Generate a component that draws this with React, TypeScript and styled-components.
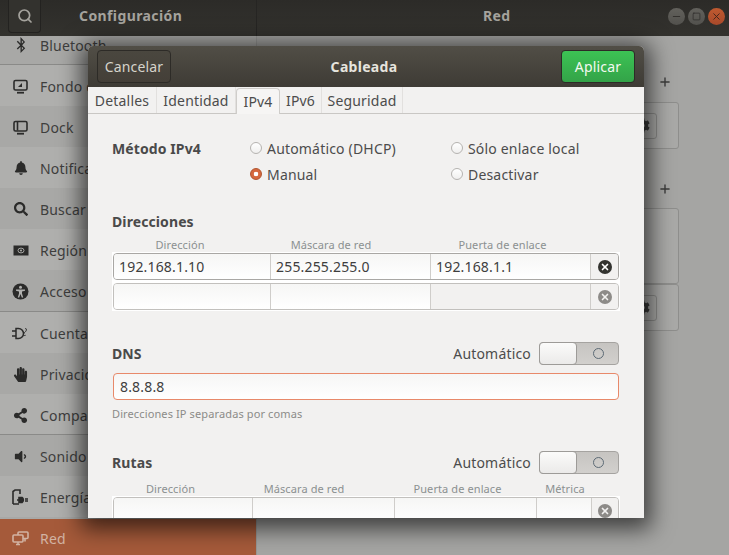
import React, { ReactElement, ReactNode } from 'react';
import styled, { createGlobalStyle } from 'styled-components';
import { Search, Plus, Minus, Square, X } from 'lucide-react';
import {
	FaBluetoothB,
	FaBell,
	FaSearch,
	FaHandPaper,
	FaShareAlt,
	FaVolumeDown,
	FaCog,
} from 'react-icons/fa';

const GlobalStyle = createGlobalStyle`
	html, body {
		margin: 0;
		padding: 0;
		width: 729px;
		height: 555px;
		overflow: hidden;
		background: #a5a5a3;
		font-family: "Noto Sans", "Open Sans", sans-serif;
		font-size: 14px;
		letter-spacing: 0.18px;
		color: #484848;
	}
	* {
		box-sizing: border-box;
	}
`;

const Desktop = styled.div`
	position: relative;
	width: 729px;
	height: 555px;
	overflow: hidden;
	display: flex;
	flex-direction: column;
`;

const HeaderBar = styled.header`
	height: 36px;
	flex: none;
	display: flex;
	align-items: stretch;
	background: linear-gradient(#2c2b28, #33322e);
	color: #a5a39d;
	font-weight: 700;
	font-size: 14px;
	letter-spacing: 0.4px;
`;

const HeaderLeft = styled.div`
	width: 257px;
	flex: none;
	display: flex;
	align-items: flex-start;
	padding-left: 8px;
	gap: 38px;
	line-height: 31px;
	border-right: 1px solid #262523;
`;

const HeaderSearch = styled.div`
	width: 33px;
	height: 33px;
	border: 1px solid #232220;
	border-top: none;
	border-radius: 0 0 4px 4px;
	background: #33322e;
	display: flex;
	align-items: center;
	justify-content: center;
	color: #a5a39d;
`;

const HeaderRight = styled.div`
	flex: 1;
	display: flex;
	align-items: flex-start;
	padding: 8px 4px 0 226px;
	line-height: 15px;
`;

const HeaderTitle = styled.div`
	flex: 1;
`;

const WindowControls = styled.div`
	display: flex;
	gap: 3px;
`;

const WindowControl = styled.div<{ $close?: boolean }>`
	width: 17px;
	height: 17px;
	border-radius: 50%;
	background: ${(p) => (p.$close ? 'linear-gradient(#c05a30, #a8492a)' : 'linear-gradient(#62615c, #52514d)')};
	color: ${(p) => (p.$close ? '#40241a' : '#2f2e2b')};
	display: flex;
	align-items: center;
	justify-content: center;
`;

const Body = styled.div`
	flex: 1;
	display: flex;
	min-height: 0;
`;

const Sidebar = styled.nav`
	width: 257px;
	flex: none;
	overflow: hidden;
	background: #a8a8a6;
	border-right: 1px solid #979795;
`;

const SidebarList = styled.div`
	margin-top: -12px;
`;

const SidebarRow = styled.div<{ $active?: boolean; $line?: boolean; $tall?: boolean }>`
	height: ${(p) => (p.$active ? '36px' : p.$tall ? '42px' : '41px')};
	margin-top: ${(p) => (p.$active ? '2px' : '0')};
	display: flex;
	align-items: center;
	gap: 11px;
	padding: ${(p) => (p.$active ? '4px' : '2px')} 0 0 12px;
	background: ${(p) => (p.$active ? '#a55a3a' : 'transparent')};
	color: ${(p) => (p.$active ? '#d2b3a3' : '#3e3e3d')};
	border-bottom: 1px solid ${(p) => (p.$line ? '#8a8a88' : 'transparent')};
	&:nth-child(even) {
		background: ${(p) => (p.$active ? '#a55a3a' : '#afafad')};
	}
`;

const IconSlot = styled.span`
	width: 17px;
	height: 17px;
	flex: none;
	display: flex;
	align-items: center;
	justify-content: center;
`;

const Main = styled.main`
	flex: 1;
	padding: 35px 50px 0 0;
	display: flex;
	flex-direction: column;
	align-items: flex-end;
	color: #3c3c3b;
`;

const BackPlus = styled.div<{ $gap: number }>`
	height: 21px;
	margin-top: ${(p) => p.$gap}px;
	margin-right: 7px;
	display: flex;
	align-items: center;
`;

const BackCard = styled.div<{ $height: number; $gap: number }>`
	width: 200px;
	height: ${(p) => p.$height}px;
	margin-top: ${(p) => p.$gap}px;
	border: 1px solid #8e8e8c;
	border-radius: 3px;
	background: #a9a9a7;
	display: flex;
	align-items: center;
	justify-content: flex-end;
	padding-right: 21px;
`;

const GearButton = styled.div`
	width: 30px;
	height: 26px;
	border: 1px solid #8a8a88;
	border-radius: 3px;
	display: flex;
	align-items: center;
	justify-content: center;
`;

const Dialog = styled.section`
	position: absolute;
	left: 88px;
	top: 46px;
	width: 556px;
	height: 472px;
	overflow: hidden;
	display: flex;
	flex-direction: column;
	background: #f2f1f0;
	border-radius: 5px 5px 0 0;
	box-shadow: 0 4px 22px 7px rgba(0, 0, 0, 0.62);
`;

const DialogBar = styled.div`
	height: 41px;
	flex: none;
	display: flex;
	align-items: center;
	justify-content: space-between;
	padding: 0 9px;
	background: linear-gradient(#514e46, #3e3b35);
	color: #e6e4de;
`;

const DialogTitle = styled.div`
	font-weight: 700;
	letter-spacing: 0.3px;
	padding-right: 4px;
`;

const BarButton = styled.div<{ $suggested?: boolean }>`
	width: 74px;
	height: 33px;
	border-radius: 4px;
	border: 1px solid #2d2b27;
	display: flex;
	align-items: center;
	justify-content: center;
	color: ${(p) => (p.$suggested ? '#f3f9f1' : '#d6d3cb')};
	background: ${(p) => (p.$suggested ? 'linear-gradient(#3cc354, #33a348)' : 'linear-gradient(#4a473f, #443f38)')};
`;

const TabBar = styled.div`
	height: 27px;
	flex: none;
	display: flex;
	background: #f2f1f0;
	border-bottom: 1px solid #c9c7c4;
`;

const Tab = styled.div<{ $active?: boolean; $width: number }>`
	width: ${(p) => p.$width}px;
	display: flex;
	align-items: center;
	justify-content: center;
	color: #4c4c4c;
	border-right: 1px solid ${(p) => (p.$active ? 'transparent' : '#e2e0de')};
	${(p) =>
		p.$active &&
		`
		margin-top: 1px;
		margin-bottom: -1px;
		background: #f6f5f4;
		border: 1px solid #cfcdca;
		border-bottom: none;
		border-radius: 4px 4px 0 0;
	`}
`;

const Content = styled.div`
	flex: 1;
	padding: 24px 25px 0 24px;
	display: flex;
	flex-direction: column;
`;

const MethodGrid = styled.div`
	display: grid;
	grid-template-columns: 139px 201px 1fr;
	row-gap: 6px;
	align-items: center;
	grid-auto-rows: 20px;
`;

const BoldLabel = styled.div`
	font-weight: 700;
	font-size: 14px;
	letter-spacing: 0.1px;
	color: #4a4a4a;
`;

const RadioLine = styled.label`
	display: flex;
	align-items: center;
	gap: 5px;
	color: #4c4c4c;
`;

const RadioDot = styled.span<{ $on?: boolean }>`
	width: 12px;
	height: 12px;
	border-radius: 50%;
	flex: none;
	margin-left: -1px;
	border: 1px solid ${(p) => (p.$on ? '#b0532d' : '#b5b3b0')};
	background: ${(p) => (p.$on ? 'radial-gradient(circle, #fff 0 2px, #d5683e 2.6px)' : 'linear-gradient(#fff, #f0efee)')};
`;

const SectionHead = styled.div<{ $gap: number }>`
	margin-top: ${(p) => p.$gap}px;
	height: 23px;
	display: flex;
	align-items: center;
	justify-content: space-between;
`;

const SwitchGroup = styled.div`
	display: flex;
	align-items: center;
	gap: 8px;
	color: #4c4c4c;
`;

const SwitchTrack = styled.div`
	width: 80px;
	height: 23px;
	border: 1px solid #a5a3a0;
	border-radius: 4px;
	background: linear-gradient(#c6c4c1, #d2d0cd);
	display: flex;
	align-items: center;
`;

const SwitchKnob = styled.div`
	width: 38px;
	height: 23px;
	margin-left: -1px;
	border: 1px solid #9d9b98;
	border-radius: 4px;
	background: linear-gradient(#fbfbfa, #ebeae9);
`;

const SwitchMark = styled.div`
	width: 11px;
	height: 11px;
	margin-left: 16px;
	border: 1px solid #5c6a75;
	border-radius: 50%;
`;

const ColumnHeads = styled.div<{ $cols: string; $gap: number }>`
	display: grid;
	grid-template-columns: ${(p) => p.$cols};
	margin-top: ${(p) => p.$gap}px;
	height: 15px;
	font-size: 11px;
	letter-spacing: 0.1px;
	color: #8b9090;
	text-align: center;
	line-height: 15px;
`;

const EntryRows = styled.div`
	display: flex;
	flex-direction: column;
	gap: 3px;
	width: 508px;
	padding: 1px;
	background: #fff;
`;

const EntryRow = styled.div<{ $cols: string; $dim?: boolean }>`
	display: grid;
	grid-template-columns: ${(p) => p.$cols};
	height: 27px;
	flex: none;
	border: 1px solid ${(p) => (p.$dim ? '#c2c0bd' : '#a9a7a4')};
	border-radius: 4px;
	overflow: hidden;
	background: #f2f1f0;
`;

const EntryCell = styled.div<{ $off?: boolean }>`
	display: flex;
	align-items: center;
	padding-left: 5px;
	border-right: 1px solid #cfcdca;
	color: #3e3e3e;
	background: ${(p) => (p.$off ? '#f2f1f0' : 'linear-gradient(#f6f6f5, #ffffff)')};
`;

const RemoveCell = styled.div`
	display: flex;
	align-items: center;
	justify-content: center;
	background: #f2f1f0;
`;

const RemoveDot = styled.div<{ $dim?: boolean }>`
	width: 14px;
	height: 14px;
	border-radius: 50%;
	background: ${(p) => (p.$dim ? '#8d8b88' : '#33332f')};
	color: ${(p) => (p.$dim ? '#f2f1f0' : '#fff')};
	display: flex;
	align-items: center;
	justify-content: center;
`;

const FocusInput = styled.div`
	margin-top: 8px;
	height: 27px;
	margin-left: 1px;
	width: 506px;
	padding-left: 6px;
	display: flex;
	align-items: center;
	border: 1px solid #e8896a;
	border-radius: 4px;
	background: linear-gradient(#f6f6f5, #ffffff);
	color: #3e3e3e;
`;

const Hint = styled.div`
	margin-top: 6px;
	font-size: 11px;
	letter-spacing: 0.12px;
	color: #8b8b88;
`;

function NetworkIcon(): ReactElement {
	return (
		<svg width="17" height="15" viewBox="0 0 17 15" fill="none" stroke="#d2b3a3" strokeWidth="1.6">
			<rect x="6" y="1" width="10" height="6.5" rx="1" />
			<rect x="1" y="4" width="10" height="7" rx="1" fill="#a55a3a" />
			<path d="M4 13.5h4M6 11v2.5M13 7.5v3" />
		</svg>
	);
}

function DesktopIcon({ inner }: { inner: ReactNode }): ReactElement {
	return (
		<svg width="15" height="15" viewBox="0 0 15 15" fill="none" stroke="#2b2b2a" strokeWidth="1.6">
			<rect x="1" y="1.5" width="13" height="9.5" rx="1.5" />
			<path d="M4 13.7h7" strokeWidth="1.8" />
			{inner}
		</svg>
	);
}

function FlagIcon(): ReactElement {
	return (
		<svg width="16" height="11" viewBox="0 0 16 11">
			<rect x="0.5" y="0.5" width="15" height="10" fill="#2b2b2a" />
			<ellipse cx="8" cy="5.5" rx="3" ry="2.4" fill="none" stroke="#b1b1af" strokeWidth="0.9" />
			<circle cx="8" cy="5.5" r="1" fill="#b1b1af" />
		</svg>
	);
}

function AccessIcon(): ReactElement {
	return (
		<svg width="17" height="17" viewBox="0 0 17 17">
			<circle cx="8.5" cy="8.5" r="8" fill="#2b2b2a" />
			<circle cx="8.5" cy="4.2" r="1.5" fill="#b1b1af" />
			<path d="M4 6.4h9v1.3l-3 .7v2l1.2 4H9.8L8.5 11l-1.3 3.4H5.8L7 10.4v-2l-3-.7z" fill="#b1b1af" />
		</svg>
	);
}

function AccountsIcon(): ReactElement {
	return (
		<svg width="17" height="15" viewBox="0 0 17 15" fill="none" stroke="#2b2b2a" strokeWidth="1.5">
			<path d="M0 5h4M0 10h4M4 2.5h2.5a5 5 0 0 1 0 10H4z" />
			<path d="M13 2.8c2.2-.8 1.8 2-.2 3.5s-1.6 4 .8 3" strokeWidth="1" />
		</svg>
	);
}

function PowerIcon(): ReactElement {
	return (
		<svg width="17" height="16" viewBox="0 0 17 16" fill="none" stroke="#2b2b2a" strokeWidth="1.6">
			<path d="M1 15V2.5L3 1h5v4M1 15h6" />
			<path d="M7 8.5h3a3 3 0 0 1 0 5H7z" fill="#2b2b2a" />
			<path d="M13 10h3M13 12h3M5 11h2" />
		</svg>
	);
}

function RowIcon({ name }: { name: string }): ReactElement {
	const dark = '#2b2b2a';
	switch (name) {
		case 'bluetooth':
			return <FaBluetoothB size={16} color={dark} />;
		case 'background':
			return <DesktopIcon inner={<path d="M9 4v4H5z" fill="#2b2b2a" stroke="none" />} />;
		case 'dock':
			return <DesktopIcon inner={<path d="M4.5 2v8.5" strokeWidth="1.6" />} />;
		case 'bell':
			return <FaBell size={14} color={dark} />;
		case 'search':
			return <FaSearch size={14} color={dark} />;
		case 'flag':
			return <FlagIcon />;
		case 'access':
			return <AccessIcon />;
		case 'accounts':
			return <AccountsIcon />;
		case 'hand':
			return <FaHandPaper size={15} color={dark} />;
		case 'share':
			return <FaShareAlt size={15} color={dark} />;
		case 'sound':
			return <FaVolumeDown size={15} color={dark} />;
		case 'power':
			return <PowerIcon />;
		default:
			return <NetworkIcon />;
	}
}

const sidebarItems = [
	{ icon: 'bluetooth', label: 'Bluetooth', line: true },
	{ icon: 'background', label: 'Fondo de escritorio' },
	{ icon: 'dock', label: 'Dock' },
	{ icon: 'bell', label: 'Notificaciones' },
	{ icon: 'search', label: 'Buscar' },
	{ icon: 'flag', label: 'Región e idioma' },
	{ icon: 'access', label: 'Acceso universal', line: true, tall: true },
	{ icon: 'accounts', label: 'Cuentas en línea' },
	{ icon: 'hand', label: 'Privacidad' },
	{ icon: 'share', label: 'Compartir', line: true },
	{ icon: 'sound', label: 'Sonido' },
	{ icon: 'power', label: 'Energía' },
];

const tabs = [
	{ label: 'Detalles', width: 69 },
	{ label: 'Identidad', width: 79 },
	{ label: 'IPv4', width: 44, active: true },
	{ label: 'IPv6', width: 42 },
	{ label: 'Seguridad', width: 81 },
];

const addressHeads = '136px 166px 177px';
const addressCols = '157px 160px 160px 1fr';
const routeHeads = '117px 150px 157px 58px';
const routeCols = '139px 142px 142px 55px 1fr';

function Remove({ dim }: { dim?: boolean }): ReactElement {
	return (
		<RemoveCell>
			<RemoveDot $dim={dim}>
				<X size={10} strokeWidth={4} />
			</RemoveDot>
		</RemoveCell>
	);
}

function AutoSwitch(): ReactElement {
	return (
		<SwitchGroup>
			Automático
			<SwitchTrack>
				<SwitchKnob />
				<SwitchMark />
			</SwitchTrack>
		</SwitchGroup>
	);
}

export default function App(): ReactElement {
	return (
		<Desktop>
			<GlobalStyle />
			<HeaderBar>
				<HeaderLeft>
					<HeaderSearch>
						<Search size={16} strokeWidth={2.6} />
					</HeaderSearch>
					Configuración
				</HeaderLeft>
				<HeaderRight>
					<HeaderTitle>Red</HeaderTitle>
					<WindowControls>
						<WindowControl>
							<Minus size={11} />
						</WindowControl>
						<WindowControl>
							<Square size={9} />
						</WindowControl>
						<WindowControl $close>
							<X size={11} />
						</WindowControl>
					</WindowControls>
				</HeaderRight>
			</HeaderBar>
			<Body>
				<Sidebar>
					<SidebarList>
						{sidebarItems.map((item) => (
							<SidebarRow key={item.label} $line={item.line} $tall={item.tall}>
								<IconSlot>
									<RowIcon name={item.icon} />
								</IconSlot>
								{item.label}
							</SidebarRow>
						))}
						<SidebarRow $active>
							<IconSlot>
								<NetworkIcon />
							</IconSlot>
							Red
						</SidebarRow>
					</SidebarList>
				</Sidebar>
				<Main>
					<BackPlus $gap={0}>
						<Plus size={14} strokeWidth={2.4} />
					</BackPlus>
					<BackCard $height={47} $gap={10}>
						<GearButton>
							<FaCog size={15} />
						</GearButton>
					</BackCard>
					<BackPlus $gap={29}>
						<Plus size={14} strokeWidth={2.4} />
					</BackPlus>
					<BackCard $height={76} $gap={9} />
					<BackCard $height={47} $gap={0}>
						<GearButton>
							<FaCog size={15} />
						</GearButton>
					</BackCard>
				</Main>
			</Body>
			<Dialog>
				<DialogBar>
					<BarButton>Cancelar</BarButton>
					<DialogTitle>Cableada</DialogTitle>
					<BarButton $suggested>Aplicar</BarButton>
				</DialogBar>
				<TabBar>
					{tabs.map((tab) => (
						<Tab key={tab.label} $width={tab.width} $active={tab.active}>
							{tab.label}
						</Tab>
					))}
				</TabBar>
				<Content>
					<MethodGrid>
						<BoldLabel>Método IPv4</BoldLabel>
						<RadioLine>
							<RadioDot />
							Automático (DHCP)
						</RadioLine>
						<RadioLine>
							<RadioDot />
							Sólo enlace local
						</RadioLine>
						<span />
						<RadioLine>
							<RadioDot $on />
							Manual
						</RadioLine>
						<RadioLine>
							<RadioDot />
							Desactivar
						</RadioLine>
					</MethodGrid>
					<SectionHead $gap={26}>
						<BoldLabel>Direcciones</BoldLabel>
					</SectionHead>
					<ColumnHeads $cols={addressHeads} $gap={4}>
						<span>Dirección</span>
						<span>Máscara de red</span>
						<span>Puerta de enlace</span>
					</ColumnHeads>
					<EntryRows>
						<EntryRow $cols={addressCols}>
							<EntryCell>192.168.1.10</EntryCell>
							<EntryCell>255.255.255.0</EntryCell>
							<EntryCell>192.168.1.1</EntryCell>
							<Remove />
						</EntryRow>
						<EntryRow $cols={addressCols} $dim>
							<EntryCell />
							<EntryCell />
							<EntryCell $off />
							<Remove dim />
						</EntryRow>
					</EntryRows>
					<SectionHead $gap={31}>
						<BoldLabel>DNS</BoldLabel>
						<AutoSwitch />
					</SectionHead>
					<FocusInput>8.8.8.8</FocusInput>
					<Hint>Direcciones IP separadas por comas</Hint>
					<SectionHead $gap={30}>
						<BoldLabel>Rutas</BoldLabel>
						<AutoSwitch />
					</SectionHead>
					<ColumnHeads $cols={routeHeads} $gap={7}>
						<span>Dirección</span>
						<span>Máscara de red</span>
						<span>Puerta de enlace</span>
						<span>Métrica</span>
					</ColumnHeads>
					<EntryRows>
						<EntryRow $cols={routeCols} $dim>
							<EntryCell />
							<EntryCell />
							<EntryCell />
							<EntryCell />
							<Remove dim />
						</EntryRow>
					</EntryRows>
				</Content>
			</Dialog>
		</Desktop>
	);
}
